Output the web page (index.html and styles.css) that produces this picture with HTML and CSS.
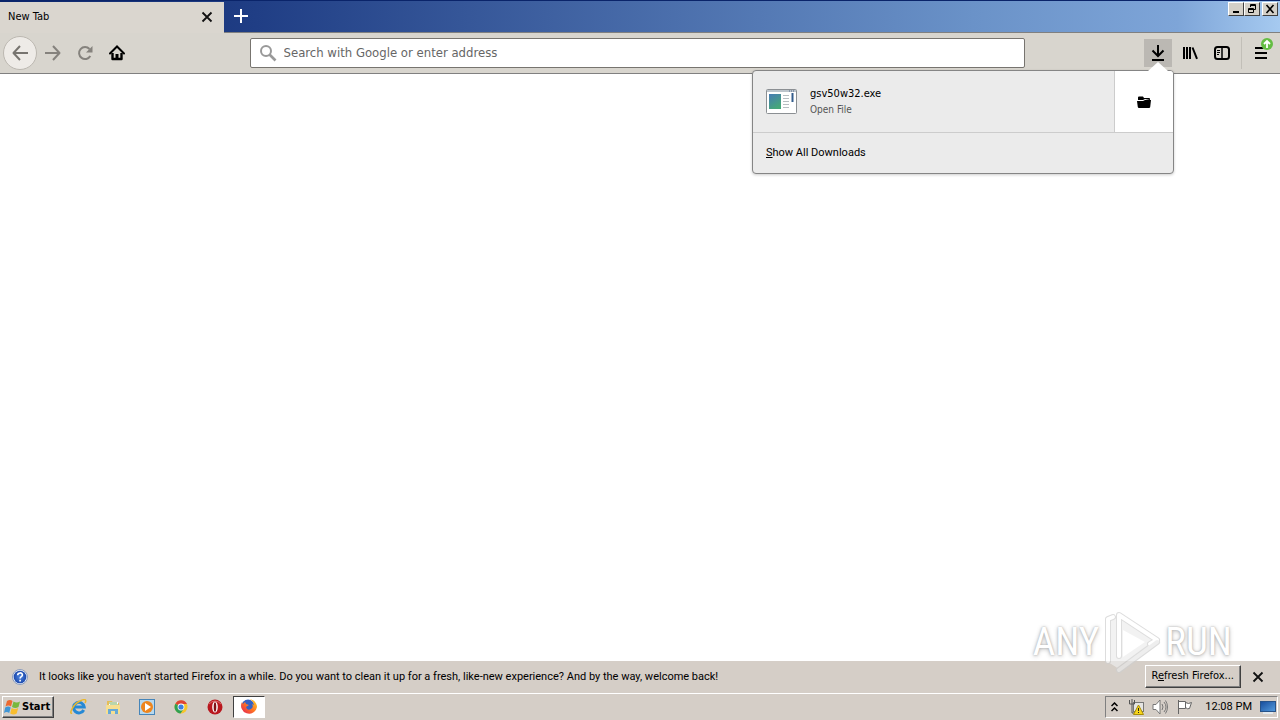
FILE: index.html
```html
<!DOCTYPE html>
<html lang="en">
<head>
<meta charset="utf-8">
<title>New Tab</title>
<link rel="stylesheet" href="styles.css">
</head>
<body>
<header class="titlebar">
  <div class="tab">
    <span class="tab-title">New Tab</span>
    <button class="icon-btn tab-close" aria-label="Close tab"><svg width="12" height="12" viewBox="0 0 12 12"><path d="M1.500 1.500l9 9m0-9l-9 9" stroke="#111" stroke-width="1.800"/></svg></button>
  </div>
  <button class="icon-btn new-tab" aria-label="New tab"><svg width="14" height="14" viewBox="0 0 14 14"><path d="M7 0v14M0 7h14" stroke="#fff" stroke-width="2"/></svg></button>
  <div class="window-controls">
    <button class="win-btn" aria-label="Minimize"><svg width="12" height="10"><path d="M3 8h6" stroke="#000" stroke-width="2"/></svg></button>
    <button class="win-btn" aria-label="Restore"><svg width="12" height="10" fill="none" stroke="#000"><path d="M4.500 3V.5h5v5H8M4 1.500h6M2.500 4.500h5v4h-5zM2 5.500h6"/></svg></button>
    <button class="win-btn win-close" aria-label="Close"><svg width="12" height="10"><path d="M2.500 1l7 8m0-8l-7 8" stroke="#000" stroke-width="1.600"/></svg></button>
  </div>
</header>

<nav class="toolbar">
  <div class="nav-group">
    <button class="icon-btn back" aria-label="Back"><svg width="16" height="16" fill="none" stroke="#77746f" stroke-width="2"><path d="M16 8H2M8 1L1.500 8L8 15" stroke-linejoin="round"/></svg></button>
    <button class="icon-btn nav-btn" aria-label="Forward"><svg width="16" height="16" fill="none" stroke="#85827d" stroke-width="2"><path d="M0 8h14M8 1l6.500 7L8 15" stroke-linejoin="round"/></svg></button>
    <button class="icon-btn nav-btn" aria-label="Reload"><svg width="16" height="16" fill="none" stroke="#85827d" stroke-width="2"><path d="M12.500 4A6 6 0 1 0 13.300 11"/><path d="M15.500 1v6.500H9z" fill="#85827d" stroke="none"/></svg></button>
    <button class="icon-btn nav-btn" aria-label="Home"><svg width="16" height="16"><path d="M1 8.500L8 1.500l7 7" fill="none" stroke="#000" stroke-width="2" stroke-linecap="round"/><path d="M3.500 8v6h9V8" fill="none" stroke="#000" stroke-width="2.400" stroke-linejoin="round"/><path d="M6.500 9h3v5h-3z"/></svg></button>
  </div>
  <label class="urlbar">
    <svg width="18" height="18" fill="none" stroke="#999"><circle cx="7" cy="7" r="5" stroke-width="2"/><path d="M10.500 10.500l6 6" stroke-width="2.600"/></svg>
    <input type="text" aria-label="Address" placeholder="Search with Google or enter address">
  </label>
  <div class="tool-group">
    <button class="icon-btn tool-btn active" aria-label="Downloads"><svg width="16" height="16" fill="none" stroke="#000" stroke-width="2"><path d="M8 0v11M2.500 5.500L8 11l5.500-5.500M2 15h12"/></svg></button>
    <button class="icon-btn tool-btn" aria-label="Library"><svg width="16" height="16" stroke="#000" stroke-width="2"><path d="M2 2v12M5 2v12M8 2v12M10.500 2.500l4.500 11.300"/></svg></button>
    <button class="icon-btn tool-btn" aria-label="Sidebars"><svg width="16" height="16" fill="none" stroke="#000"><rect x="1" y="2" width="14" height="12" rx="2.500" stroke-width="2"/><path d="M8 2v12" stroke-width="1.500"/><path d="M3 5.500h3M3 7.500h3M3 9.500h2"/></svg></button>
    <span class="divider"></span>
    <button class="icon-btn tool-btn menu" aria-label="Menu"><svg width="16" height="16" stroke="#000" stroke-width="2"><path d="M2 3h12M2 8h12M2 13h12"/></svg>
      <svg class="badge" width="12" height="12"><circle cx="6" cy="6" r="6" fill="#64bd43"/><path d="M6 10V3M3 6l3-3 3 3" fill="none" stroke="#fff" stroke-width="1.800"/></svg></button>
  </div>

  <section class="downloads" aria-label="Downloads">
    <svg class="arrow" width="20" height="9"><path d="M0 9L10 0l10 9z" fill="#fff"/></svg>
    <div class="download-row">
      <svg width="32" height="28" viewBox="0 0 32 28"><defs><linearGradient id="app" x2="0.500" y2="1"><stop stop-color="#477bb5"/><stop offset="1" stop-color="#46a779"/></linearGradient></defs><rect x=".5" y="1.500" width="30" height="24" rx="1" fill="#fff" stroke="#8b8f93"/><path d="M1 3h29" stroke="#bdc5cc" stroke-width="2"/><path d="M23 3h6" stroke="#52688a" stroke-dasharray="1 1"/><rect x="3" y="6" width="12" height="15" fill="url(#app)"/><path d="M17 7.500h6M17 10.500h6M17 13.500h6M17 16.500h6M17 19.500h6" stroke="#b7bec2"/><path d="M26.500 5v9" stroke="#345d8c" stroke-width="2"/></svg>
      <div class="file">
        <div class="file-name">gsv50w32.exe</div>
        <div class="file-action">Open File</div>
      </div>
      <button class="icon-btn folder" aria-label="Open containing folder"><svg width="14" height="12"><path d="M1 4V1.500Q1 .5 2 .5h4L7 2h5q1 0 1 1v1L8 3 6 4z"/><path d="M0 5h6l2-1h6l-.8 7q-.1 1-1.200 1H2q-1 0-1.200-1z"/></svg></button>
    </div>
    <button class="show-all"><u>S</u>how All Downloads</button>
  </section>
</nav>

<main class="page"></main>

<aside class="notification">
  <svg width="16" height="16"><defs><radialGradient id="help"><stop stop-color="#4f86e0"/><stop offset="1" stop-color="#1c49ad"/></radialGradient></defs><circle cx="8" cy="8" r="7.500" fill="#e4ebf7" stroke="#8b9cbc"/><circle cx="8" cy="8" r="6.300" fill="url(#help)"/><path d="M5.700 6.200c0-3 4.800-3 4.700-.2 0 1.600-2.300 1.600-2.300 3.400M8.100 10.800v1.700" fill="none" stroke="#fff" stroke-width="1.600"/></svg>
  <p class="message">It looks like you haven't started Firefox in a while. Do you want to clean it up for a fresh, like-new experience? And by the way, welcome back!</p>
  <button class="refresh">R<u>e</u>fresh Firefox...</button>
  <button class="icon-btn dismiss" aria-label="Dismiss"><svg width="12" height="12"><path d="M1.500 1.500l9 9m0-9l-9 9" stroke="#111" stroke-width="1.800"/></svg></button>
  <div class="watermark">
    <span>ANY</span>
    <svg width="58" height="64" viewBox="0 0 58 64" fill="none" stroke-linejoin="round" stroke-linecap="round"><path d="M17 5l37 25-38 29L5 52V10z" fill="#ededed"/><path d="M20 20v27l22-15z" fill="#fff"/><g stroke="#cfcfcf" stroke-width="6"><path d="M5 51V9l5-2M16 46V5l38 25-7 4M16 60l38-28"/></g><g stroke="#fff" stroke-width="4"><path d="M5 51V9l5-2M16 46V5l38 25-7 4"/></g><path d="M16 60l38-28" stroke="#e8e8e8" stroke-width="4"/></svg>
    <span>RUN</span>
  </div>
</aside>

<footer class="taskbar">
  <button class="start"><svg width="17" height="16"><path d="M3 2q3-2 5.500 0L7 7.500q-2.500-2-5.500 0z" fill="#ed6930"/><path d="M9.500 2.500q3 2 6.500 0L14.500 8q-3 2-6.500 0z" fill="#78b83d"/><path d="M1.200 8.500q3-2 5.500 0L5.200 14q-2.500-2-5.200 0z" fill="#4196d5"/><path d="M7.700 9q3 2 6.500 0l-1.500 5.500q-3 2-6.500 0z" fill="#f8bd2d"/></svg>Start</button>
  <div class="launchers">
    <button class="task" aria-label="Internet Explorer"><svg width="18" height="16" fill="none"><path d="M13.700 11A5.300 5.300 0 1 1 14.200 8H4.500" stroke="#2689d5" stroke-width="3"/><path d="M2 14C-1.500 16 3 5 10 2c5-2.500 7-1.500 5 2" stroke="#e9b72e" stroke-width="1.500"/></svg></button>
    <button class="task" aria-label="File Explorer"><svg width="16" height="16"><path d="M2 2h5l1 2h6v11H2z" fill="#e6bd58"/><path d="M4 3h9v5H4z" fill="#fff"/><path d="M4 4h8M5 6h8" stroke="#72ad58"/><path d="M1 6h14v9H1z" fill="#f6df91"/><path d="M3 15v-5h10v5h-3v-3H6v3z" fill="#67a9d6"/></svg></button>
    <button class="task" aria-label="Media Player"><svg width="16" height="16"><rect x=".5" y=".5" width="15" height="15" fill="#b7d8ee" stroke="#4685b9"/><circle cx="8" cy="8" r="6" fill="#ee851d"/><path d="M6 4l6 4-6 4z" fill="#fff"/></svg></button>
    <button class="task" aria-label="Chrome"><svg width="16" height="16"><circle cx="8" cy="8" r="6.500" fill="#f6c52c"/><path d="M8 8L2.400 4.700A6.500 6.500 0 0 1 14 5H8z" fill="#df4334"/><path d="M8 8L2.400 4.700A6.500 6.500 0 0 0 7.500 14.500L11 9.500z" fill="#30a052"/><circle cx="8" cy="8" r="3.400" fill="#fff"/><circle cx="8" cy="8" r="2.600" fill="#3d7fe0"/></svg></button>
    <button class="task" aria-label="Opera"><svg width="16" height="16"><circle cx="8" cy="8" r="7.500" fill="#b9171e"/><path d="M2 5q6-6 12 0" fill="none" stroke="#dd6668"/><ellipse cx="8" cy="8" rx="2.800" ry="5.500" fill="#fff"/><ellipse cx="8" cy="8" rx="1.300" ry="4.700" fill="#811116"/></svg></button>
    <button class="task task-active" aria-label="Firefox"><svg width="18" height="18" viewBox="0 0 18 18"><defs><linearGradient id="fox" x1="1" y1="0" x2="0" y2="1"><stop stop-color="#ffda29"/><stop offset=".5" stop-color="#ff7623"/><stop offset="1" stop-color="#e21b57"/></linearGradient></defs><circle cx="8" cy="8" r="6.500" fill="#3561c4"/><path d="M10 1c4 1 7 4 7 8a8 8 0 1 1-15-5l1 2 2-2 1 2 3 1-3 2q1 4 5 2 3-2 1-5l2 1q-1-4-4-6z" fill="url(#fox)"/></svg></button>
  </div>
  <div class="tray">
    <svg class="expand" width="7" height="10" fill="none" stroke="#000" stroke-width="1.500"><path d="M.5 4l3-3 3 3M.5 9l3-3 3 3"/></svg>
    <svg width="16" height="16"><rect x="5.500" y="3.500" width="10" height="9" fill="#e5e5e3" stroke="#777"/><path d="M1.500 1v4h5V1M4 0v14h4" fill="none" stroke="#555"/><path d="M10.500 6l5 9.500H5.500z" fill="#f8d51b" stroke="#a88d0b"/><path d="M10.500 9v3M10.500 13v1" stroke="#222"/></svg>
    <svg width="16" height="16" fill="none" stroke="#777"><path d="M1 5.500h3L8 1v14l-4-4.500H1z" fill="#fff"/><path d="M10 5q2 3 0 6M12 3q4 5 0 10M13.500 1.500q4 6.500 0 13"/></svg>
    <svg width="16" height="16" stroke="#666" fill="#fff"><path d="M2.500 1v14M2.500 2.500h7v7h-7M9.500 3.500q3 2 6 0l-2 6q-2 1-4-1"/></svg>
    <time class="clock">12:08 PM</time>
    <svg width="16" height="13"><defs><linearGradient id="screen" x2="1" y2="1"><stop stop-color="#164c9b"/><stop offset="1" stop-color="#559ddf"/></linearGradient></defs><rect x=".5" y=".5" width="15" height="10" fill="url(#screen)" stroke="#275389"/><path d="M3 12h10" stroke="#e3e9ed" stroke-width="2"/></svg>
  </div>
</footer>
</body>
</html>
```
FILE: styles.css
```css
* { box-sizing: border-box; }
body {
  margin: 0;
  min-height: 100vh;
  display: flex;
  flex-direction: column;
  background: #fff;
  color: #000;
  font: 11px/16px "DejaVu Sans Condensed", "Noto Sans", sans-serif;
}
button { font: inherit; color: inherit; border: 0; padding: 0; background: none; }
svg { display: block; flex: none; }
.icon-btn { display: flex; align-items: center; justify-content: center; flex: none; }

.titlebar {
  display: flex;
  height: 33px;
  border-top: 1px solid #0a246a;
  border-bottom: 1px solid #808080;
  background: linear-gradient(90deg, #0a246a 0%, #203e85 20%, #6a92c8 76%, #7ea5d8 92%, #a6caf0 100%);
}
.tab {
  display: flex;
  align-items: center;
  justify-content: space-between;
  width: 224px;
  height: 32px;
  margin-top: 1px;
  padding: 0 11px 2px 8px;
  background: #dad6cf;
}
.new-tab { width: 34px; height: 30px; }
.window-controls { display: flex; margin: 1px 2px 0 auto; }
.win-btn {
  display: flex;
  align-items: center;
  justify-content: center;
  width: 16px;
  height: 14px;
  background: #d4d0c8;
  border: 1px solid;
  border-color: #fff #404040 #404040 #fff;
}
.win-close { margin-left: 2px; }

.toolbar {
  position: relative;
  display: flex;
  align-items: center;
  height: 41px;
  padding: 0 5px 0 3px;
  background: #d8d5ce;
  border-bottom: 1px solid #808080;
}
.nav-group, .tool-group { display: flex; align-items: center; flex: 1; }
.tool-group { justify-content: flex-end; gap: 4px; }
.back { width: 34px; height: 34px; border: 1px solid #bcb8b1; border-radius: 50%; background: #eeebe7; }
.nav-btn { width: 32px; height: 32px; }
.urlbar {
  display: flex;
  align-items: center;
  flex: 0 1 775px;
  height: 30px;
  margin-right: 4px;
  padding: 0 8px;
  gap: 7px;
  background: #fff;
  border: 1px solid #77746f;
  border-radius: 2px;
}
.urlbar input {
  flex: 1;
  min-width: 0;
  padding: 0;
  border: 0;
  outline: 0;
  background: none;
  font: 13px/20px "DejaVu Sans Condensed", "Noto Sans", sans-serif;
}
.urlbar input::placeholder { color: #666; opacity: 1; }
.tool-btn { width: 28px; height: 28px; }
.active { background: #bbb8b3; }
.divider { width: 1px; height: 32px; margin: 0 1px; background: #c2bfb8; }
.menu { position: relative; }
.badge { position: absolute; top: -1px; right: 2px; }

.downloads {
  position: absolute;
  z-index: 2;
  top: 37px;
  right: 106px;
  width: 422px;
  background: #ebebeb;
  border: 1px solid #858585;
  border-radius: 4px;
  box-shadow: 0 1px 3px #0003;
}
.arrow { position: absolute; top: -9px; right: 5px; }
.download-row {
  display: flex;
  align-items: center;
  height: 62px;
  padding-left: 13px;
  gap: 12px;
  border-bottom: 1px solid #ccc;
}
.file { flex: 1; }
.file-action { color: #555; font-size: 10px; }
.folder { align-self: stretch; width: 59px; background: #fff; border-left: 1px solid #ccc; border-top-right-radius: 3px; }
.show-all {
  display: block;
  width: 100%;
  height: 40px;
  padding-left: 13px;
  text-align: left;
  font-family: Roboto, sans-serif;
}

.page { flex: 1; }

.notification {
  position: relative;
  display: flex;
  align-items: center;
  height: 32px;
  padding: 0 16px 0 12px;
  gap: 11px;
  background: #d5cec7;
}
.message { flex: 1; margin: 0; font-family: Roboto, sans-serif; }
.refresh {
  height: 23px;
  margin-bottom: 2px;
  padding: 0 6px;
  position: relative;
  z-index: 2;
  background: #d5cec7;
  border: 1px solid;
  border-color: #fff #404040 #404040 #fff;
  box-shadow: inset -1px -1px #808080;
}
.watermark {
  position: absolute;
  z-index: 1;
  right: 48px;
  bottom: 19px;
  display: flex;
  align-items: center;
  gap: 4px;
  opacity: .7;
  color: #fff;
  font: 39px/64px "Roboto Condensed", Roboto, sans-serif;
  text-shadow: 0 0 2px #888, 0 1px 4px #999;
  pointer-events: none;
}

.taskbar {
  display: flex;
  align-items: center;
  height: 27px;
  padding: 0 2px;
  background: #d5cec7;
  border-top: 1px solid #fff;
}
.start {
  display: flex;
  align-items: center;
  gap: 1px;
  width: 52px;
  height: 22px;
  padding-left: 1px;
  font-weight: bold;
  border: 1px solid;
  border-color: #fff #404040 #404040 #fff;
  box-shadow: inset -1px -1px #808080;
}
.launchers { display: flex; margin-left: 9px; gap: 2px; }
.task { display: flex; align-items: center; justify-content: center; width: 32px; height: 22px; }
.task-active { background: #fff; border: 1px solid; border-color: #404040 #fff #fff #404040; }
.tray {
  display: flex;
  align-items: center;
  height: 22px;
  margin-left: auto;
  padding: 0 1px 0 5px;
  gap: 8px;
  border: 1px solid;
  border-color: #808080 #fff #fff #808080;
}
.expand { margin-right: 2px; }
.clock { margin-left: 5px; font-family: Roboto, sans-serif; }
```
